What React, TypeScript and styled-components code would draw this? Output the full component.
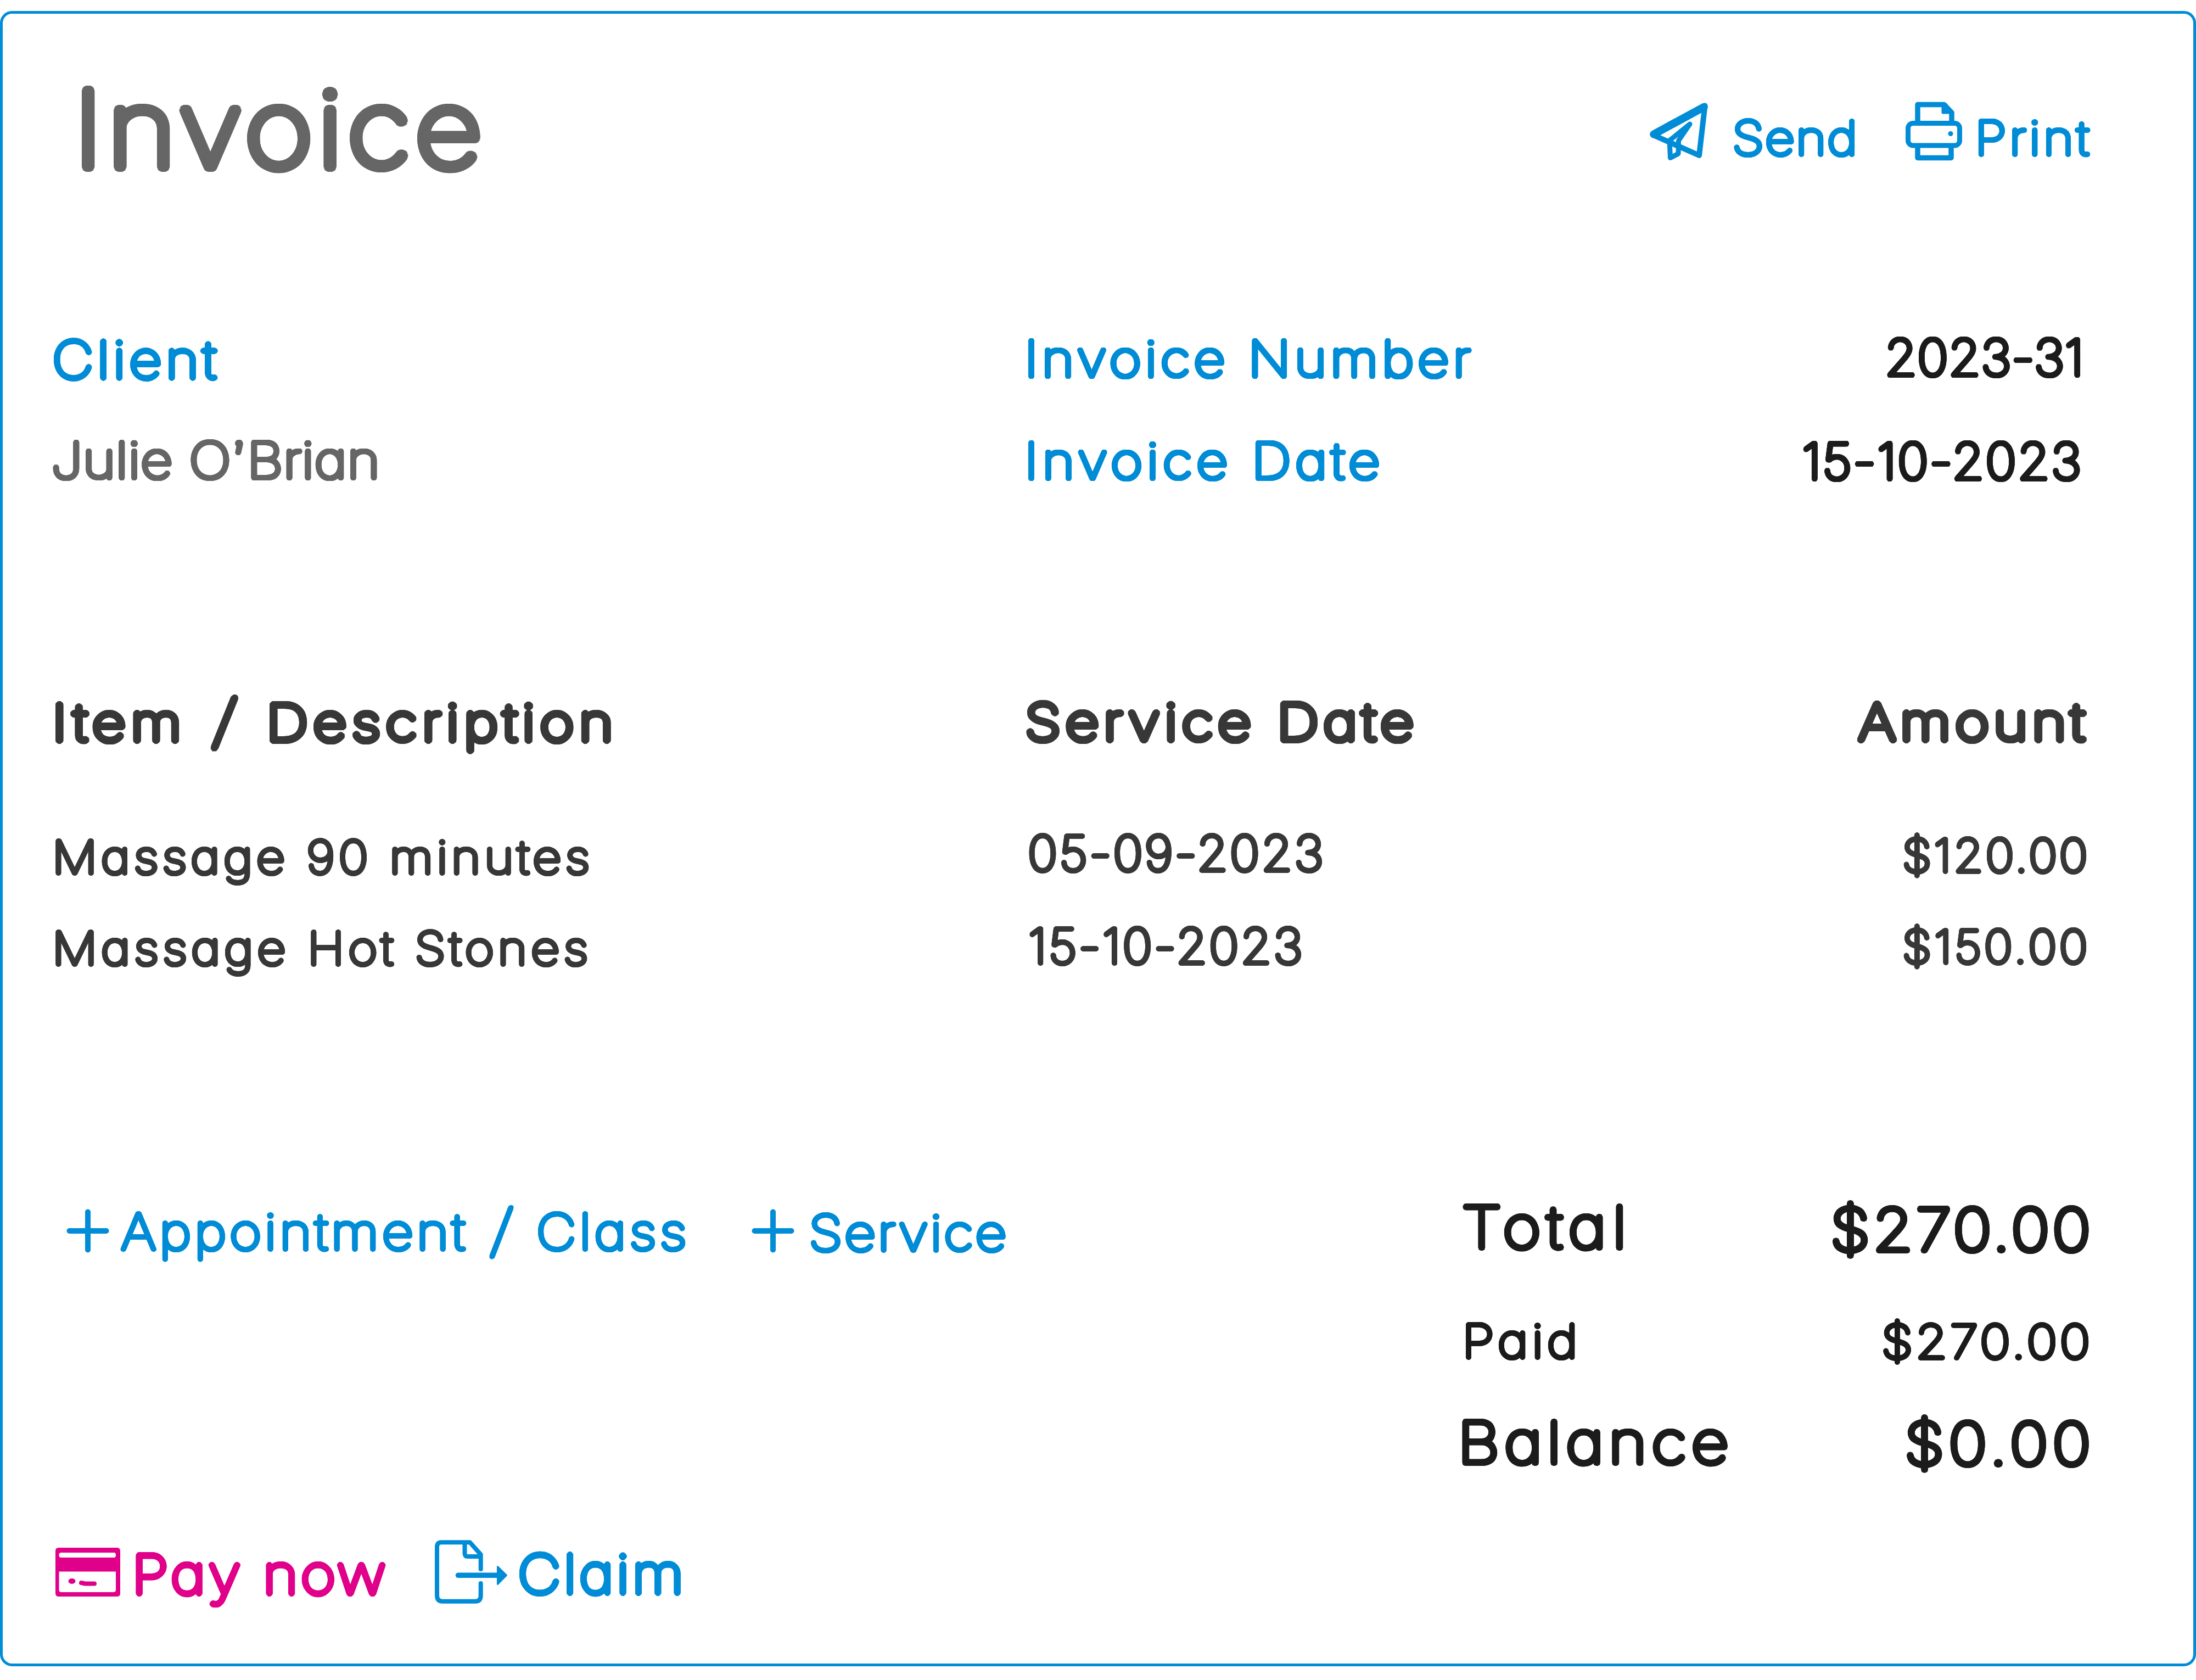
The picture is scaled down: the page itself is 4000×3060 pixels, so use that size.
import React from 'react';
import styled, { createGlobalStyle } from 'styled-components';

const color = {
  blue: '#008cd6',
  magenta: '#e0008a',
  grey: '#666666',
  ink: '#383838',
  black: '#1c1c1c',
};

const GlobalStyle = createGlobalStyle`
  *, *::before, *::after { box-sizing: border-box; }
  body { margin: 0; background: #fff; }
`;

/* Rings of unblurred shadows thicken a hairline weight into strokes with round ends. */
const roundStroke = (radius: number, stretch: number) =>
  [1, 0.66, 0.33]
    .flatMap(k =>
      Array.from({ length: 24 }, (_, i) => {
        const a = (i * Math.PI) / 12;
        const x = (radius * k * Math.cos(a)) / stretch;
        const y = radius * k * Math.sin(a);
        return `${x.toFixed(2)}px ${y.toFixed(2)}px 0 currentColor`;
      }),
    )
    .join(',');

interface LabelProps {
  $size: number;
  $pen: number;
  $track: number;
  $color: string;
  $stretch?: number;
  $left?: number;
  $right?: number;
  $drop?: number;
  $line?: number;
}

const Label = styled.span<LabelProps>`
  display: block;
  flex: none;
  font-family: Inter, 'Liberation Sans', sans-serif;
  font-weight: 100;
  font-size: ${p => p.$size}px;
  line-height: ${p => p.$line ?? 100}px;
  letter-spacing: ${p => p.$track}px;
  font-feature-settings: 'cv11', 'ss03', 'calt' 0;
  white-space: nowrap;
  color: ${p => p.$color};
  text-shadow: ${p => roundStroke(p.$pen, p.$stretch ?? 1.12)};
  transform: scaleX(${p => p.$stretch ?? 1.12});
  transform-origin: ${p => (p.$right === undefined ? 'left' : 'right')} center;
  margin: ${p => p.$drop ?? 0}px ${p => p.$right ?? 0}px 0 ${p => p.$left ?? 0}px;
`;

/* A taller, more slanted slash between the two halves of a label. */
const Slash = styled.span<{ $before: number; $after: number }>`
  display: inline-block;
  transform: translateY(-3px) scaleY(1.14) skewX(-7deg);
  margin: 0 ${p => p.$after}px 0 ${p => p.$before}px;
`;

const Sheet = styled.main`
  width: 4000px;
  height: 3060px;
  padding: 20px 0 25px;
  background: #fff;
`;

const Card = styled.section`
  display: flex;
  flex-direction: column;
  height: 3015px;
  padding: 130px 190px 0 92px;
  border: 5px solid ${color.blue};
  border-radius: 22px;
`;

const Header = styled.header`
  display: flex;
  justify-content: space-between;
  align-items: flex-start;
  height: 160px;
`;

const Toolbar = styled.nav`
  display: flex;
  align-items: center;
  width: 805px;
  height: 100px;
  margin-top: 46.5px;
`;

const Action = styled.a<{ $gap?: number }>`
  display: flex;
  flex: none;
  align-items: center;
  margin-left: ${p => p.$gap ?? 0}px;
`;

const Icon = styled.svg<{ $lift?: number }>`
  display: block;
  flex: none;
  overflow: visible;
  fill: none;
  stroke-linecap: round;
  stroke-linejoin: round;
  margin-bottom: ${p => p.$lift ?? 0}px;
`;

const Grid = styled.div<{ $top: number; $gap: number }>`
  display: grid;
  grid-template-columns: 1776px 1fr auto;
  grid-auto-rows: 100px;
  row-gap: ${p => p.$gap}px;
  align-items: start;
  justify-items: start;
  margin-top: ${p => p.$top}px;
  & > :nth-child(3n) { justify-self: end; }
`;

const Footer = styled.div`
  display: flex;
  justify-content: space-between;
  align-items: flex-start;
  margin-top: 412px;
`;

const AddBar = styled.nav`
  display: flex;
  align-items: center;
  height: 100px;
  padding-left: 25px;
  margin-top: 8.5px;
`;

const Totals = styled.div`
  width: 1141px;
`;

const TotalRow = styled.div<{ $top?: number }>`
  display: flex;
  justify-content: space-between;
  align-items: flex-start;
  height: 100px;
  margin-top: ${p => p.$top ?? 0}px;
`;

const PayBar = styled.nav`
  display: flex;
  align-items: center;
  height: 100px;
  margin-top: 140px;
  padding-left: 4px;
`;

const SendIcon = () => (
  <Icon $lift={23} width="116" height="116" viewBox="3000 182 116 116" stroke={color.blue}>
    <path d="M3103.500 195 L3012.500 244.500" strokeWidth="14.500" />
    <path d="M3011.500 246 L3095 283 L3105.500 192.500" strokeWidth="10" />
    <path d="M3078 226 L3041 256 L3042.500 287.500 L3057 280 L3057.500 256 Z" strokeWidth="9" />
  </Icon>
);

const PrintIcon = () => (
  <Icon $lift={25} width="110" height="110" viewBox="3468 184 110 110" stroke={color.blue}>
    <path d="M3493 224 V190.500 H3541 L3555 205 V224" strokeWidth="9.500" />
    <path d="M3539 190 V205 H3556 L3544 190 Z" fill={color.blue} strokeWidth="5" />
    <rect x="3475.500" y="224.500" width="94" height="40.500" rx="9" strokeWidth="9" />
    <path d="M3493 267 V287.500 H3554 V267" strokeWidth="9.500" />
    <circle cx="3553" cy="243.500" r="4.500" fill={color.blue} stroke="none" />
  </Icon>
);

const PlusIcon = () => (
  <Icon $lift={3} width="76" height="78" viewBox="0 0 76 78" stroke={color.blue} strokeWidth="10">
    <path d="M38 4.500 V73.500 M4.500 39 H71.500" />
  </Icon>
);

const CardIcon = () => (
  <Icon $lift={7} width="118" height="89" viewBox="101 2819 118 89">
    <path
      fill={color.magenta}
      fillRule="evenodd"
      d="M107 2819 H213 Q219 2819 219 2825 V2902 Q219 2908 213 2908 H107 Q101 2908 101 2902 V2825 Q101 2819 107 2819 Z
         M111 2828 Q107.500 2828 107.500 2832.500 Q107.500 2837 111 2837 H208 Q211 2837 211 2832.500 Q211 2828 208 2828 Z
         M107.500 2862.500 V2896 Q107.500 2900 112 2900 H206 Q211 2900 211 2896 V2862.500 Z"
    />
    <ellipse cx="131" cy="2880" rx="6.500" ry="5" fill={color.magenta} />
    <path d="M148 2883 L155 2884.500 H172" stroke={color.magenta} strokeWidth="8" />
  </Icon>
);

const ClaimIcon = () => (
  <Icon $lift={9} width="136" height="120" viewBox="790 2803 136 120" stroke={color.blue} strokeWidth="8">
    <path d="M875.700 2858 V2831.500 L856 2809.300 H804 Q796 2809.300 796 2818 V2906 Q796 2916.700 806 2916.700 H866 Q875.700 2916.700 875.700 2906 V2884" />
    <path d="M846.500 2811 V2829 Q846.500 2835 852 2835 H874" />
    <path d="M834.500 2869.300 H906" strokeWidth="9.500" />
    <path d="M906.500 2853.500 L922.500 2869.300 L906.500 2885.500 Z" fill={color.blue} strokeWidth="3" />
  </Icon>
);

const items = [
  {
    name: 'Massage 90 minutes', nameTrack: 5.79, nameDrop: 8,
    date: '05-09-2023', dateTrack: 3.11, dateLeft: -1.2,
    amount: '$120.00', amountTrack: 3.46, amountRight: -1.2, amountDrop: 4,
  },
  {
    name: 'Massage Hot Stones', nameTrack: 6, nameDrop: 5,
    date: '15-10-2023', dateTrack: 3.06, dateLeft: -0.2,
    amount: '$150.00', amountTrack: 4.26, amountRight: -2, amountDrop: 1,
  },
];

export default function App() {
  return (
    <Sheet>
      <GlobalStyle />
      <Card>
        <Header>
          <Label as="h1" $size={191} $pen={9.3} $track={7.6} $line={160} $left={37} $color={color.grey}>Invoice</Label>
          <Toolbar>
            <Action>
              <SendIcon />
              <Label $size={85} $pen={3.9} $track={1.4} $left={39} $color={color.blue}>Send</Label>
            </Action>
            <Action $gap={107.6}>
              <PrintIcon />
              <Label $size={85} $pen={3.9} $track={4.6} $left={18.7} $color={color.blue}>Print</Label>
            </Action>
          </Toolbar>
        </Header>

        <Grid $top={285} $gap={87}>
          <Label $size={93} $pen={4.6} $track={5.95} $left={-2.1} $drop={5} $color={color.blue}>Client</Label>
          <Label $size={90} $pen={4.3} $track={5.85} $left={-6.9} $drop={4} $color={color.blue}>Invoice Number</Label>
          <Label $size={91} $pen={4.3} $track={0.59} $stretch={1.04} $right={8.9} $drop={0.5} $color={color.black}>2023-31</Label>
          <Label $size={91} $pen={4.3} $track={0.6} $left={-4.5} $drop={0.5} $color={color.grey}>Julie O’Brian</Label>
          <Label $size={90} $pen={4.3} $track={6.56} $left={-6.9} $drop={3} $color={color.blue}>Invoice Date</Label>
          <Label $size={91} $pen={4.3} $track={2.32} $stretch={1.04} $right={11.6} $drop={2.5} $color={color.black}>15-10-2023</Label>
        </Grid>

        <Grid $top={378} $gap={0}>
          <Label $size={91} $pen={6} $track={8} $stretch={1.17} $left={-1.7} $drop={1} $color={color.ink}>
            Item <Slash $before={11.5} $after={8}>/</Slash> Description
          </Label>
          <Label $size={91} $pen={6} $track={7.24} $stretch={1.17} $left={-6.2} $color={color.ink}>Service Date</Label>
          <Label $size={91} $pen={6} $track={6.9} $stretch={1.17} $right={0} $color={color.ink}>Amount</Label>
        </Grid>

        <Grid $top={139} $gap={69}>
          {items.map(item => (
            <React.Fragment key={item.name}>
              <Label $size={82} $pen={3.9} $track={item.nameTrack} $left={-2.3} $drop={item.nameDrop} $color={color.ink}>{item.name}</Label>
              <Label $size={88} $pen={4} $track={item.dateTrack} $stretch={1.04} $left={item.dateLeft} $color={color.ink}>{item.date}</Label>
              <Label $size={83} $pen={3.8} $track={item.amountTrack} $stretch={1.06} $right={item.amountRight} $drop={item.amountDrop} $color={color.ink}>{item.amount}</Label>
            </React.Fragment>
          ))}
        </Grid>

        <Footer>
          <AddBar>
            <Action>
              <PlusIcon />
              <Label $size={90} $pen={3.9} $track={4.85} $left={22} $color={color.blue}>
                Appointment <Slash $before={9.5} $after={7}>/</Slash> Class
              </Label>
            </Action>
            <Action $gap={224.7}>
              <PlusIcon />
              <Label $size={90} $pen={3.9} $track={2.8} $left={27.1} $drop={4} $color={color.blue}>Service</Label>
            </Action>
          </AddBar>
          <Totals>
            <TotalRow>
              <Label $size={104} $pen={5} $track={9.5} $stretch={1.15} $left={-1.9} $color={color.black}>Total</Label>
              <Label $size={106} $pen={5} $track={4.24} $right={-8.3} $drop={4.5} $color={color.black}>$270.00</Label>
            </TotalRow>
            <TotalRow $top={107}>
              <Label $size={84} $pen={3.8} $track={5.67} $stretch={1.15} $left={-1.5} $drop={0.5} $color={color.black}>Paid</Label>
              <Label $size={84} $pen={3.8} $track={4.02} $right={-7} $drop={1.5} $color={color.black}>$270.00</Label>
            </TotalRow>
            <TotalRow $top={85}>
              <Label $size={104} $pen={5} $track={7.3} $stretch={1.15} $left={-8.6} $color={color.black}>Balance</Label>
              <Label $size={106} $pen={5} $track={6.77} $right={-11.1} $drop={2.5} $color={color.black}>$0.00</Label>
            </TotalRow>
          </Totals>
        </Footer>

        <PayBar>
          <Action>
            <CardIcon />
            <Label $size={98} $pen={4.8} $track={4.13} $left={21} $drop={2} $color={color.magenta}>Pay now</Label>
          </Action>
          <Action $gap={133}>
            <ClaimIcon />
            <Label $size={97} $pen={4.8} $track={4.4} $left={17} $color={color.blue}>Claim</Label>
          </Action>
        </PayBar>
      </Card>
    </Sheet>
  );
}
